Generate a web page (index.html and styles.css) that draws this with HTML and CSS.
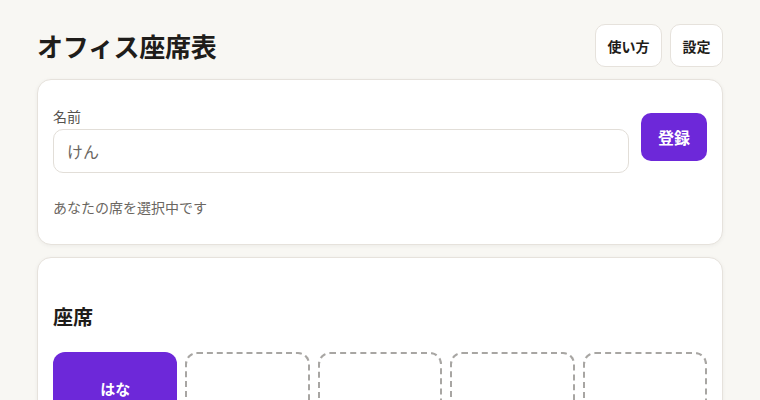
FILE: index.html
```html
<!DOCTYPE html>
<html lang="ja">
<head>
<meta charset="utf-8">
<title>オフィス座席表</title>
<link rel="stylesheet" href="styles.css">
</head>
<body>
<div class="page">
  <header class="header">
    <h1 class="title">オフィス座席表</h1>
    <div class="actions">
      <button class="btn">使い方</button>
      <button class="btn">設定</button>
    </div>
  </header>

  <section class="card card-form">
    <div class="form-row">
      <div class="field">
        <label class="label">名前</label>
        <input class="input" type="text" value="けん">
      </div>
      <button class="btn-primary">登録</button>
    </div>
    <p class="status">あなたの席を選択中です</p>
  </section>

  <section class="card card-seats">
    <h2 class="section-title">座席</h2>
    <div class="seats">
      <div class="seat seat-taken">はな</div>
      <div class="seat seat-empty"></div>
      <div class="seat seat-empty"></div>
      <div class="seat seat-empty"></div>
      <div class="seat seat-empty"></div>
    </div>
  </section>
</div>
</body>
</html>
```

FILE: styles.css
```css
* { box-sizing: border-box; }
html, body {
  margin: 0;
  background: #f8f7f3;
  font-family: "Noto Sans CJK JP", "Noto Sans", sans-serif;
  color: #1f1d1a;
}
.page {
  padding: 24px 37px 0;
  display: flex;
  flex-direction: column;
  gap: 12px;
}
.header {
  display: flex;
  align-items: center;
  justify-content: space-between;
}
.title {
  margin: 0;
  font-size: 26px;
  font-weight: 700;
  line-height: 36px;
  letter-spacing: -0.3px;
}
.actions {
  display: flex;
  gap: 8px;
}
.btn {
  height: 43px;
  padding: 0 11.5px;
  background: #fff;
  border: 1px solid #e6e2dc;
  border-radius: 10px;
  font-family: inherit;
  font-size: 14px;
  font-weight: 700;
  color: #1f1d1a;
}
.card {
  background: #fff;
  border: 1px solid #e6e2dc;
  border-radius: 14px;
  box-shadow: 0 1px 4px rgba(0, 0, 0, 0.05);
}
.card-form {
  padding: 26px 15px 27px;
}
.form-row {
  display: flex;
  align-items: flex-start;
  gap: 12px;
}
.field {
  flex: 1;
  display: flex;
  flex-direction: column;
  gap: 3px;
}
.label {
  font-size: 14px;
  line-height: 20px;
  color: #55524d;
}
.input {
  height: 44px;
  border: 1px solid #e2ded8;
  border-radius: 10px;
  padding: 0 13px;
  font-family: inherit;
  font-size: 16px;
  color: #6a6661;
  background: #fff;
  outline: none;
}
.btn-primary {
  margin-top: 7px;
  width: 66px;
  height: 48px;
  border: none;
  border-radius: 10px;
  background: #6d28d9;
  color: #fff;
  font-family: inherit;
  font-size: 16px;
  font-weight: 700;
}
.status {
  margin: 24px 0 0;
  font-size: 14px;
  line-height: 20px;
  color: #6a6661;
}
.card-seats {
  padding: 45px 15px 16px;
}
.section-title {
  margin: 0 0 21px;
  font-size: 20px;
  font-weight: 700;
  line-height: 28px;
}
.seats {
  display: grid;
  grid-template-columns: repeat(5, 1fr);
  gap: 8px;
}
.seat {
  height: 72px;
  border-radius: 12px;
  display: flex;
  align-items: center;
  justify-content: center;
  font-size: 15px;
  font-weight: 700;
}
.seat-taken {
  background: #6d28d9;
  color: #fff;
}
.seat-empty {
  border: 2px dashed #a8a6a3;
}
```
